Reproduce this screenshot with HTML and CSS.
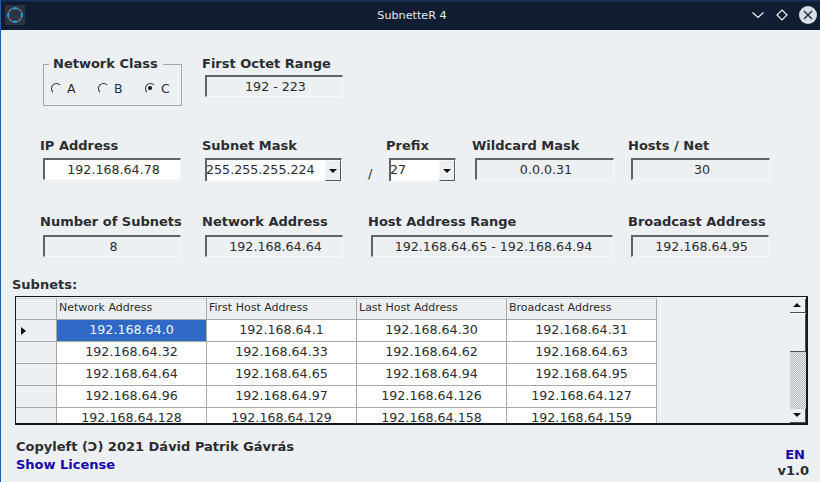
FILE: index.html
```html
<!DOCTYPE html>
<html lang="en">
<head>
<meta charset="utf-8">
<title>SubnetteR 4</title>
<link rel="stylesheet" href="styles.css">
</head>
<body>
<div class="window">
  <header class="titlebar">
    <span class="app-icon">
      <svg width="20" height="20" viewBox="0 0 20 20"><rect width="20" height="20" fill="#2c3444"/><path d="M3.500 7.500A7 7 0 0 1 7.500 3.500M12.500 3.500A7 7 0 0 1 16.500 7.500M16.500 12.500A7 7 0 0 1 12.500 16.500M7.500 16.500A7 7 0 0 1 3.500 12.500" fill="none" stroke="#9aa5b2" stroke-width="1"/><path d="M8 3.200H12M8 16.800H12M3.200 8V12M16.800 8V12" fill="none" stroke="#1fa6e6" stroke-width="2"/></svg>
    </span>
    <span class="title">SubnetteR 4</span>
    <span class="controls">
      <svg width="14" height="14" viewBox="0 0 14 14"><path d="M1.500 4.500 7 9.500 12.500 4.500" fill="none" stroke="#f0f3f6" stroke-width="1.200"/></svg>
      <svg width="14" height="14" viewBox="0 0 14 14"><path d="M7 2 12 7 7 12 2 7Z" fill="none" stroke="#f0f3f6" stroke-width="1.200"/></svg>
      <svg class="close" width="18" height="18" viewBox="0 0 18 18"><circle cx="9" cy="9" r="9" fill="#d8dee6"/><path d="M5 5 13 13M13 5 5 13" stroke="#1a2436" stroke-width="1.300"/></svg>
    </span>
  </header>

  <main class="content">
    <section class="form row1">
      <fieldset class="class-group">
        <legend>Network Class</legend>
        <label class="radio"><span class="dot"></span>A</label>
        <label class="radio"><span class="dot"></span>B</label>
        <label class="radio"><span class="dot on"></span>C</label>
      </fieldset>
      <div class="field span-rest">
        <div class="cap">First Octet Range</div>
        <div class="box w137">192 - 223</div>
      </div>
    </section>

    <section class="form row2">
      <div class="field">
        <div class="cap">IP Address</div>
        <div class="box input w137">192.168.64.78</div>
      </div>
      <div class="field">
        <div class="cap">Subnet Mask</div>
        <div class="combo w136"><span class="combo-val">255.255.255.224</span><span class="arrow"></span></div>
      </div>
      <div class="slash">/</div>
      <div class="field">
        <div class="cap">Prefix</div>
        <div class="combo w66"><span class="combo-val">27</span><span class="arrow"></span></div>
      </div>
      <div class="field">
        <div class="cap">Wildcard Mask</div>
        <div class="box w138">0.0.0.31</div>
      </div>
      <div class="field">
        <div class="cap">Hosts / Net</div>
        <div class="box w138">30</div>
      </div>
    </section>

    <section class="form row3">
      <div class="field">
        <div class="cap">Number of Subnets</div>
        <div class="box w137">8</div>
      </div>
      <div class="field">
        <div class="cap">Network Address</div>
        <div class="box w137">192.168.64.64</div>
      </div>
      <div class="field span3">
        <div class="cap">Host Address Range</div>
        <div class="box w241">192.168.64.65 - 192.168.64.94</div>
      </div>
      <div class="field">
        <div class="cap">Broadcast Address</div>
        <div class="box w137">192.168.64.95</div>
      </div>
    </section>

    <div class="subnets-cap">Subnets:</div>
    <div class="grid-frame">
      <div class="grid-clip">
        <table class="grid">
          <thead>
            <tr><th class="rh"></th><th>Network Address</th><th>First Host Address</th><th>Last Host Address</th><th>Broadcast Address</th></tr>
          </thead>
          <tbody>
            <tr><td class="rh"><span class="marker"></span></td><td class="sel">192.168.64.0</td><td>192.168.64.1</td><td>192.168.64.30</td><td>192.168.64.31</td></tr>
            <tr><td class="rh"></td><td>192.168.64.32</td><td>192.168.64.33</td><td>192.168.64.62</td><td>192.168.64.63</td></tr>
            <tr><td class="rh"></td><td>192.168.64.64</td><td>192.168.64.65</td><td>192.168.64.94</td><td>192.168.64.95</td></tr>
            <tr><td class="rh"></td><td>192.168.64.96</td><td>192.168.64.97</td><td>192.168.64.126</td><td>192.168.64.127</td></tr>
            <tr><td class="rh"></td><td>192.168.64.128</td><td>192.168.64.129</td><td>192.168.64.158</td><td>192.168.64.159</td></tr>
          </tbody>
        </table>
      </div>
      <div class="scrollbar">
        <div class="sb-btn"><span class="tri up"></span></div>
        <div class="sb-thumb"></div>
        <div class="sb-track"></div>
        <div class="sb-btn"><span class="tri down"></span></div>
      </div>
    </div>

    <footer class="foot">
      <div>
        <div class="copy">Copyleft (Ↄ) 2021 Dávid Patrik Gávrás</div>
        <div class="link">Show License</div>
      </div>
      <div class="foot-right">
        <div class="link en">EN</div>
        <div class="copy">v1.0</div>
      </div>
    </footer>
  </main>
</div>
</body>
</html>
```
FILE: styles.css
```css
* { box-sizing: border-box; }
html, body { margin: 0; padding: 0; }
body {
  width: 820px;
  height: 482px;
  overflow: hidden;
  font-family: "DejaVu Sans", sans-serif;
  color: #2b2d30;
  background: #edf0f2;
}
.window {
  height: 482px;
  display: flex;
  flex-direction: column;
  border-left: 1px solid #1f5fa8;
}
.titlebar {
  height: 30px;
  flex: none;
  display: flex;
  align-items: center;
  position: relative;
  padding: 0 3px 0 4px;
  background: linear-gradient(#14315f 0, #14315f 1px, #101c30 2px, #111d33 100%);
  color: #e4e8ee;
  font-size: 11.2px;
}
.app-icon { display: flex; width: 20px; height: 20px; }
.title { position: absolute; left: 0; right: 0; text-align: center; padding-left: 3px; top: 8px; line-height: 15px; }
.controls { margin-left: auto; display: flex; align-items: center; gap: 10px; position: relative; }
.content { flex: 1; position: relative; padding: 0 11px 0 14px; }

.form {
  display: grid;
  grid-template-columns: 162px 166px 18px 86px 156px 1fr;
  margin-left: 25px;
}
.row1 { padding-top: 26px; height: 96px; }
.row2 { height: 88px; padding-top: 12px; }
.row3 { height: 61px; }
.span-rest { grid-column: 2 / 7; }
.span3 { grid-column: 3 / 6; }
.cap { font-size: 13px; font-weight: 700; line-height: 16px; white-space: nowrap; }
.box {
  margin: 5px 0 0 3px;
  height: 22px;
  line-height: 20px;
  text-align: center;
  font-size: 12.65px;
  padding-left: 2px;
  background: #edf0f2;
  border-top: 2px solid #5f6266;
  border-left: 2px solid #5f6266;
  border-right: 1px solid #f8f9fa;
  border-bottom: 1px solid #f8f9fa;
  white-space: nowrap;
}
.row1 .box { margin-top: 3px; line-height: 19px; }
.row2 .box { margin-top: 4px; }
.input { background: #fff; }
.w137 { width: 138px; }
.w138 { width: 139px; }
.w241 { width: 242px; }
.w136 { width: 137px; }
.w66 { width: 67px; }

.class-group {
  margin: 0 0 0 3px;
  width: 139px;
  height: 50px;
  padding: 0 0 0 7px;
  border: 1px solid #a4a7aa;
  display: flex;
  gap: 20px;
}
.class-group legend {
  font-size: 13px;
  font-weight: 700;
  line-height: 16px;
  padding: 0 5px 0 4px;
  margin-left: -2px;
}
.radio { font-size: 12.5px; display: flex; align-items: center; gap: 5px; height: 20px; margin-top: 6px; width: 27px; }
.dot {
  width: 11px; height: 11px; border-radius: 50%; position: relative; flex: none;
  border: 1.500px solid transparent;
  border-top-color: #333; border-left-color: #333;
  background: #edf0f2;
}
.dot.on::after { content: ""; position: absolute; left: 2px; top: 2px; width: 4px; height: 4px; border-radius: 50%; background: #111; }

.combo {
  margin: 4px 0 0 3px;
  height: 23px;
  display: flex;
  background: #fff;
  border-top: 2px solid #5f6266;
  border-left: 2px solid #5f6266;
  border-right: 1px solid #f8f9fa;
  font-size: 12.65px;
}
.combo-val { flex: 1; line-height: 19px; margin-left: -1px; white-space: nowrap; overflow: hidden; }
.arrow {
  width: 16px; flex: none; position: relative;
  background: #edf0f2;
  border: 1px solid #f8f9fa;
  border-right: 1.500px solid #55585c;
  border-bottom: 1.500px solid #55585c;
}
.arrow::after {
  content: ""; position: absolute; left: 3px; top: 8px;
  border-left: 4px solid transparent; border-right: 4px solid transparent; border-top: 4px solid #111;
}
.slash { font-size: 13px; padding-top: 28px; line-height: 16px; }

.subnets-cap { font-size: 13px; font-weight: 700; line-height: 16px; margin: 2px 0 3px -3px; }

.grid-frame {
  width: 793px;
  height: 129px;
  border: 2px solid #16181b;
  border-width: 1px 2px 2px 1px;
  display: flex;
  justify-content: space-between;
  background: #edf0f2;
}
.grid-clip { overflow: hidden; padding-top: 1px; }
.grid { border-collapse: separate; border-spacing: 0; table-layout: fixed; width: 641px; }
.grid th, .grid td {
  width: 150px; height: 22px; padding: 0; overflow: hidden; white-space: nowrap;
  border-right: 1px solid #a6a9ac;
  border-bottom: 1px solid #a6a9ac;
}
.grid th {
  font-size: 11px; font-weight: 400; text-align: left; padding: 0 0 2px 2px; background: #edf0f2; line-height: 16px;
  border-top: 1px solid #d0d3d6;
}
.grid th.rh, .grid td.rh {
  width: 41px; background: #edf0f2; padding: 0; position: relative;
}
.grid td { font-size: 12.65px; text-align: center; background: #fff; line-height: 17px; padding-bottom: 3px; }
.grid td.sel { background: #2f69c5; color: #f2f6fc; }
.marker {
  position: absolute; left: 5px; top: 7px;
  border-top: 4.500px solid transparent; border-bottom: 4.500px solid transparent; border-left: 5px solid #111;
}
.scrollbar { width: 16px; display: flex; flex-direction: column; margin-top: 2px; }
.sb-btn {
  height: 14px; flex: none; background: #edf0f2; position: relative;
  border-right: 1.500px solid #4c4f53; border-bottom: 1.500px solid #4c4f53;
}
.tri { position: absolute; left: 3px; top: 4px; border-left: 4px solid transparent; border-right: 4px solid transparent; }
.tri.up { border-bottom: 4px solid #111; }
.tri.down { border-top: 4px solid #111; }
.sb-thumb {
  height: 39px; flex: none; background: #edf0f2;
  border-top: 1px solid #fff;
  border-right: 1.500px solid #4c4f53; border-bottom: 1.500px solid #4c4f53;
}
.sb-track { flex: 1; background: repeating-conic-gradient(#b4b6b8 0 25%, #eceeef 0 50%) 0 0 / 2px 2px; }

.foot {
  display: flex;
  justify-content: space-between;
  margin: 13px 0 0 1px;
  font-size: 13px;
  font-weight: 700;
  line-height: 18px;
}
.link { color: #1308a8; }
.en { margin-right: 4px; }
.foot-right { text-align: right; padding-top: 9px; line-height: 16px; }
```
